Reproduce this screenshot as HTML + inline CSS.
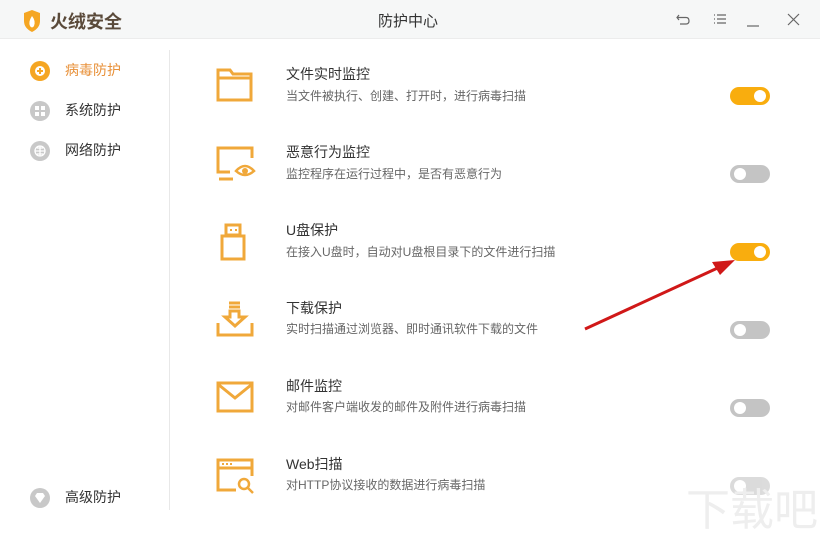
<!DOCTYPE html><html><head><meta charset="utf-8"><style>
*{margin:0;padding:0;box-sizing:border-box}
body{width:820px;height:540px;background:#fff;font-family:"Liberation Sans","Noto Sans CJK SC",sans-serif;position:relative;overflow:hidden}
.hd{position:absolute;left:0;top:0;width:820px;height:39px;background:#f6f7f7;border-bottom:1px solid #ececec}
.abs{position:absolute}
.nav{position:absolute;left:30px;font-size:14px;color:#333}
.nav i{position:absolute;left:0;top:-1px;width:20px;height:20px;border-radius:50%;background:#c8c8c8}
.nav span{position:absolute;left:35px;top:-2px;white-space:nowrap}
.t{position:absolute;left:286px;font-size:14px;color:#333}
.d{position:absolute;left:286px;font-size:12px;color:#666}
.tg{position:absolute;left:730px;width:40px;height:18px;border-radius:9px;background:#c4c4c4}
.tg::after{content:"";position:absolute;top:3px;left:4px;width:12px;height:12px;border-radius:50%;background:#fff}
.tg.on{background:#f9ad0e}.tg.on::after{left:24px}
svg.ic{position:absolute;left:216px}
</style></head><body>
<div class="hd"></div>
<svg class="abs" style="left:22px;top:10px" width="20" height="22" viewBox="0 0 20 22"><path d="M2 3 L10 0 L18 3 L18 11 Q18 18 10 22 Q2 18 2 11Z" fill="#f5a623"/><path d="M10 6 Q14 11 12 16 Q10 19 8 16 Q6 12 10 6Z" fill="#fff"/></svg>
<div class="abs" style="left:50px;top:8px;font-size:18px;font-weight:bold;color:#5a4a3a">火绒安全</div>
<div class="abs" style="left:378px;top:10px;font-size:15px;color:#333">防护中心</div>
<svg class="abs" style="left:676px;top:12px" width="130" height="16" viewBox="0 0 130 16" fill="none" stroke="#666" stroke-width="1.2"><path d="M3 3 L1 5.5 L3 8 M1 5.5 H10 Q13 5.5 13 9 Q13 12 10 12 H4"/><path d="M38 3h1 M38 7h1 M38 11h1 M41 3h9 M41 7h9 M41 11h9"/><path d="M71 14h12"/><path d="M112 2l11 11 M123 2l-11 11"/></svg>
<div class="abs" style="left:169px;top:50px;width:1px;height:460px;background:#e8e8e8"></div>
<div class="nav" style="top:62px"><i style="background:#f5a623"></i><b style="position:absolute;left:5px;top:4px;width:10px;height:10px;border-radius:50%;background:#fff"></b><b style="position:absolute;left:7px;top:8px;width:6px;height:2px;background:#f5a623"></b><b style="position:absolute;left:9px;top:6px;width:2px;height:6px;background:#f5a623"></b><span style="color:#e8913a">病毒防护</span></div>
<div class="nav" style="top:102px"><i></i><svg class="abs" style="left:5px;top:4px" width="10" height="10"><path d="M0 0h4v4H0zM6 0h4v4H6zM0 6h4v4H0zM6 6h4v4H6z" fill="#fff"/></svg><span>系统防护</span></div>
<div class="nav" style="top:142px"><i></i><svg class="abs" style="left:4px;top:3px" width="12" height="12" fill="none" stroke="#fff" stroke-width="1.3"><circle cx="6" cy="6" r="5"/><path d="M1 6h10M6 1v10M3 3h6M3 9h6"/></svg><span>网络防护</span></div>
<div class="nav" style="top:489px"><i></i><svg class="abs" style="left:5px;top:4px" width="10" height="10"><path d="M2 0h6l2 3-5 7-5-7z" fill="#fff"/></svg><span>高级防护</span></div>

<svg class="ic" style="top:68px" width="38" height="34" viewBox="0 0 38 34" fill="none" stroke="#f0a83a" stroke-width="3"><path d="M2 2h12l3 4h18v26H2z M2 10h33"/></svg>
<svg class="ic" style="top:146px" width="40" height="38" viewBox="0 0 40 38" fill="none" stroke="#f0a83a" stroke-width="3"><path d="M14 26H2V2h34v10"/><path d="M20 25 Q29 15 38 25 Q29 33 20 25Z" stroke-width="2.5"/><circle cx="29" cy="25" r="3" fill="#f0a83a" stroke="none"/><path d="M3 33h14"/></svg>
<svg class="ic" style="top:223px" width="38" height="38" viewBox="0 0 38 38" fill="none" stroke="#f0a83a" stroke-width="3"><path d="M10 2h14v10H10z M6 13h22v23H6z"/><path d="M14 7h2M19 7h2" stroke-width="2"/></svg>
<svg class="ic" style="top:301px" width="38" height="36" viewBox="0 0 38 36" fill="none" stroke="#f0a83a" stroke-width="3"><path d="M13 2h11M13 6h11M14 10h9v6h6L19 25 9 16h5z M2 22v12h34V22"/></svg>
<svg class="ic" style="top:381px" width="38" height="32" viewBox="0 0 38 32" fill="none" stroke="#f0a83a" stroke-width="3"><path d="M2 2h34v28H2z M3 4l16 13 16-13"/></svg>
<svg class="ic" style="top:458px" width="40" height="36" viewBox="0 0 40 36" fill="none" stroke="#f0a83a" stroke-width="3"><path d="M20 32H2V2h34v16 M2 10h34"/><path d="M6 6h2M10 6h2M14 6h2" stroke-width="2"/><circle cx="28" cy="26" r="5" stroke-width="2.5"/><path d="M32 30l5 5" stroke-width="2.5"/></svg>

<div class="t" style="top:64px">文件实时监控</div><div class="d" style="top:87px">当文件被执行、创建、打开时，进行病毒扫描</div><div class="tg on" style="top:87px"></div>
<div class="t" style="top:142px">恶意行为监控</div><div class="d" style="top:165px">监控程序在运行过程中，是否有恶意行为</div><div class="tg" style="top:165px"></div>
<div class="t" style="top:220px">U盘保护</div><div class="d" style="top:243px">在接入U盘时，自动对U盘根目录下的文件进行扫描</div><div class="tg on" style="top:243px"></div>
<div class="t" style="top:298px">下载保护</div><div class="d" style="top:320px">实时扫描通过浏览器、即时通讯软件下载的文件</div><div class="tg" style="top:321px"></div>
<div class="t" style="top:376px">邮件监控</div><div class="d" style="top:398px">对邮件客户端收发的邮件及附件进行病毒扫描</div><div class="tg" style="top:399px"></div>
<div class="t" style="top:454px">Web扫描</div><div class="d" style="top:476px">对HTTP协议接收的数据进行病毒扫描</div><div class="tg" style="top:477px;opacity:.6"></div>

<svg class="abs" style="left:0;top:0" width="820" height="540"><path d="M585 329 L722 266" stroke="#d01818" stroke-width="3"/><path d="M735 260 L712 262 L720 275Z" fill="#d01818"/>
<text x="686" y="525" font-size="44" fill="#eeeeee" font-family="Liberation Sans,Noto Sans CJK SC,sans-serif">下载吧</text></svg>
</body></html>
